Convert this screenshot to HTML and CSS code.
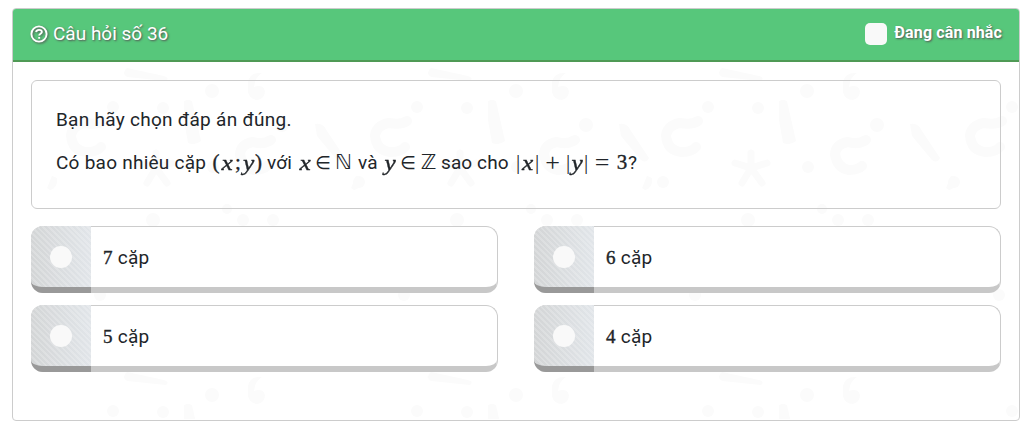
FILE: index.html
```html
<!DOCTYPE html>
<html lang="vi">
<head>
    <meta charset="UTF-8">
    <meta name="viewport" content="width=device-width, initial-scale=1.0">
    <title>Câu hỏi số 36</title>
    <link rel="stylesheet" href="styles.css">
</head>
<body>
    <div class="question-panel">
        <svg class="pattern" width="1006" height="357" viewBox="13 62 1006 357" aria-hidden="true">
            <defs>
                <g id="doodles">
                    <path d="M127 68Q121 73 127 77L166 81Q170 78 164 76Z"/>
                    <path d="M262 73Q250 72 248 82L248 92Q250 100 258 100Q265 98 265 91Q263 84 254 87Q255 77 262 73Z"/>
                    <path d="M184 101Q188 99 192 101L201 141Q195 146 188 143L184 120Z"/>
                    <path d="M315 124Q323 122 327 131L345 158Q342 164 337 160L317 136Z"/>
                    <path class="line" d="M103 121Q97 125 85 123Q73 125 71 135Q72 151 87 152Q97 152 101 147"/>
                    <path class="line" d="M271 140Q263 145 253 142Q241 144 240 154Q242 168 254 170Q263 170 267 166"/>
                    <path class="star" d="M156 153V168M140 163L156 168L172 163M156 168L147 183M156 168L167 183"/>
                    <path d="M52 176L57 178Q58 188 50 190L47 188Z"/>
                    <circle cx="212" cy="91" r="7"/>
                    <circle cx="113" cy="107" r="6"/>
                    <circle cx="163" cy="108" r="6"/>
                    <circle cx="282" cy="125" r="7"/>
                    <circle cx="213" cy="167" r="6"/>
                    <circle cx="359" cy="182" r="6"/>
                    <circle cx="227" cy="209" r="5"/>
                    <circle cx="153" cy="220" r="7"/>
                    <circle cx="243" cy="220" r="6"/>
                    <circle cx="273" cy="220" r="6"/>
                    <circle cx="100" cy="295" r="6"/>
                </g>
            </defs>
            <use href="#doodles"/>
            <use href="#doodles" x="304"/>
            <use href="#doodles" x="595"/>
            <use href="#doodles" x="899"/>
            <use href="#doodles" y="304"/>
            <use href="#doodles" x="304" y="304"/>
            <use href="#doodles" x="595" y="304"/>
            <use href="#doodles" x="899" y="304"/>
        </svg>

        <div class="panel-header">
            <div class="title">
                <svg class="icon" width="18" height="18" viewBox="0 0 18 18">
                    <circle cx="9" cy="9" r="7.6"/>
                    <path d="M6 7.1C6.5 5.4 7.6 4.9 9 4.9C10.7 4.9 11.9 5.8 11.9 7.1C11.9 8.8 9.2 8.7 9.2 10.5M9.2 11.9V13.7"/>
                </svg>
                <span>Câu hỏi số 36</span>
            </div>
            <label class="consider">
                <input type="checkbox">
                <span>Đang cân nhắc</span>
            </label>
        </div>

        <div class="panel-body">
            <div class="question">
                <p>Bạn hãy chọn đáp án đúng.</p>
                <p class="formula-line">
                    <span class="lead">Có bao nhiêu cặp</span>
                    <span class="math pair"><span>(</span><i>x</i><span>;</span><i>y</i><span>)</span></span>
                    <span>với</span>
                    <span class="math member"><i>x</i><span class="sym">∈</span><span class="set">ℕ</span></span>
                    <span>và</span>
                    <span class="math member"><i>y</i><span class="sym">∈</span><span class="set">ℤ</span></span>
                    <span>sao cho</span>
                    <span class="math equation"><span class="bar">|</span><i>x</i><span class="bar">|</span><span class="op">+</span><span class="bar">|</span><i>y</i><span class="bar">|</span><span class="op">=</span><span>3</span></span>
                    <span>?</span>
                </p>
            </div>

            <div class="answers">
                <label class="answer">
                    <span class="pick"><input type="radio" name="answer"></span>
                    <span class="text"><span class="num">7</span> cặp</span>
                </label>
                <label class="answer">
                    <span class="pick"><input type="radio" name="answer"></span>
                    <span class="text"><span class="num">6</span> cặp</span>
                </label>
                <label class="answer">
                    <span class="pick"><input type="radio" name="answer"></span>
                    <span class="text"><span class="num">5</span> cặp</span>
                </label>
                <label class="answer">
                    <span class="pick"><input type="radio" name="answer"></span>
                    <span class="text"><span class="num">4</span> cặp</span>
                </label>
            </div>
        </div>
    </div>
</body>
</html>
```
FILE: styles.css
```css
* {
    box-sizing: border-box;
}
body {
    margin: 0;
    padding: 8px 4px 0 12px;
    background-color: #fff;
    color: #212529;
    font-family: Roboto, "Noto Sans", sans-serif;
    font-size: 19px;
}
.question-panel {
    position: relative;
    height: 413px;
    border: 1px solid #ccc;
    border-radius: 4px;
    overflow: hidden;
}
.pattern {
    position: absolute;
    top: 53px;
    left: 0;
    fill: #fbfbfb;
}
.pattern .line {
    fill: none;
    stroke: #fbfbfb;
    stroke-width: 10;
    stroke-linecap: round;
}
.pattern .star {
    fill: none;
    stroke: #fbfbfb;
    stroke-width: 7;
    stroke-linecap: round;
}
.panel-header {
    position: relative;
    display: flex;
    justify-content: space-between;
    height: 53px;
    padding: 0 17px 2px 17px;
    background-color: #57c77b;
    border-bottom: 2px solid #4f9a55;
    color: #fff;
    text-shadow: 1px 1px 2px #555;
}
.title {
    display: flex;
    align-items: center;
    gap: 5px;
}
.icon {
    fill: none;
    stroke: #fff;
    stroke-width: 1.9;
    filter: drop-shadow(1px 1px 1px #555);
}
.consider {
    display: flex;
    align-items: center;
    gap: 7px;
    padding-bottom: 3px;
    font-size: 16px;
    font-weight: bold;
    letter-spacing: 0.13px;
}
.consider input {
    appearance: none;
    width: 22px;
    height: 22px;
    margin: 3px 0 0;
    border-radius: 5px;
    background-color: #f9f9f9;
}
.panel-body {
    position: relative;
    padding: 18px;
}
.question {
    height: 129px;
    padding: 17px 24px;
    border: 1px solid #ccc;
    border-radius: 6px;
}
.question p {
    margin: 0;
    line-height: 43px;
    letter-spacing: 0.28px;
    white-space: nowrap;
}
.question .formula-line {
    display: grid;
    grid-template-columns: 156px 55px 32px 59px 26px 57px 75px 112px 10px;
    letter-spacing: 0.1px;
}
.formula-line .lead {
    letter-spacing: 0.25px;
}
.math {
    display: grid;
    font-family: "Liberation Serif", serif;
    font-size: 21px;
    letter-spacing: 0;
    text-align: center;
    -webkit-text-stroke: 0.35px #212529;
}
.math i {
    font-size: 22px;
    transform: scaleX(1.15);
}
.math .sym,
.math .set {
    font-family: "DejaVu Sans", sans-serif;
    font-size: 18px;
    -webkit-text-stroke: 0;
}
.math .set {
    font-size: 21px;
}
.math .op {
    font-size: 26px;
    -webkit-text-stroke: 0;
}
.math .bar {
    font-size: 21px;
    -webkit-text-stroke: 0;
}
.pair {
    grid-template-columns: 8px 14px 8px 13px 7px;
}
.member {
    grid-template-columns: 12px 24px 17px;
}
.equation {
    grid-template-columns: 4px 15px 4px 27px 4px 14px 4px 28px 12px;
}
.answers {
    display: grid;
    grid-template-columns: 467px 467px;
    column-gap: 36px;
    row-gap: 12px;
    margin-top: 17px;
}
.answer {
    display: flex;
    height: 67px;
    border: 1px solid #ccc;
    border-bottom: 6px solid #c8c8c8;
    border-radius: 12px;
    background-color: #fff;
}
.pick {
    display: flex;
    align-items: center;
    justify-content: center;
    width: 60px;
    height: 67px;
    margin: -1px 0 0 -1px;
    border-bottom: 6px solid #999;
    border-radius: 12px 0 0 12px;
    background: repeating-linear-gradient(45deg, transparent 0 2px, rgba(255, 255, 255, 0.2) 2px 4px), linear-gradient(90deg, #d3d5d6, #e1e5e9);
}
.pick input {
    appearance: none;
    width: 22px;
    height: 22px;
    margin: 0;
    border-radius: 50%;
    background-color: #f9f9f9;
}
.text {
    padding-left: 12px;
    line-height: 62px;
    letter-spacing: 0.25px;
}
.num {
    font-family: "Liberation Serif", serif;
    font-size: 19px;
    -webkit-text-stroke: 0.4px #212529;
}
```
